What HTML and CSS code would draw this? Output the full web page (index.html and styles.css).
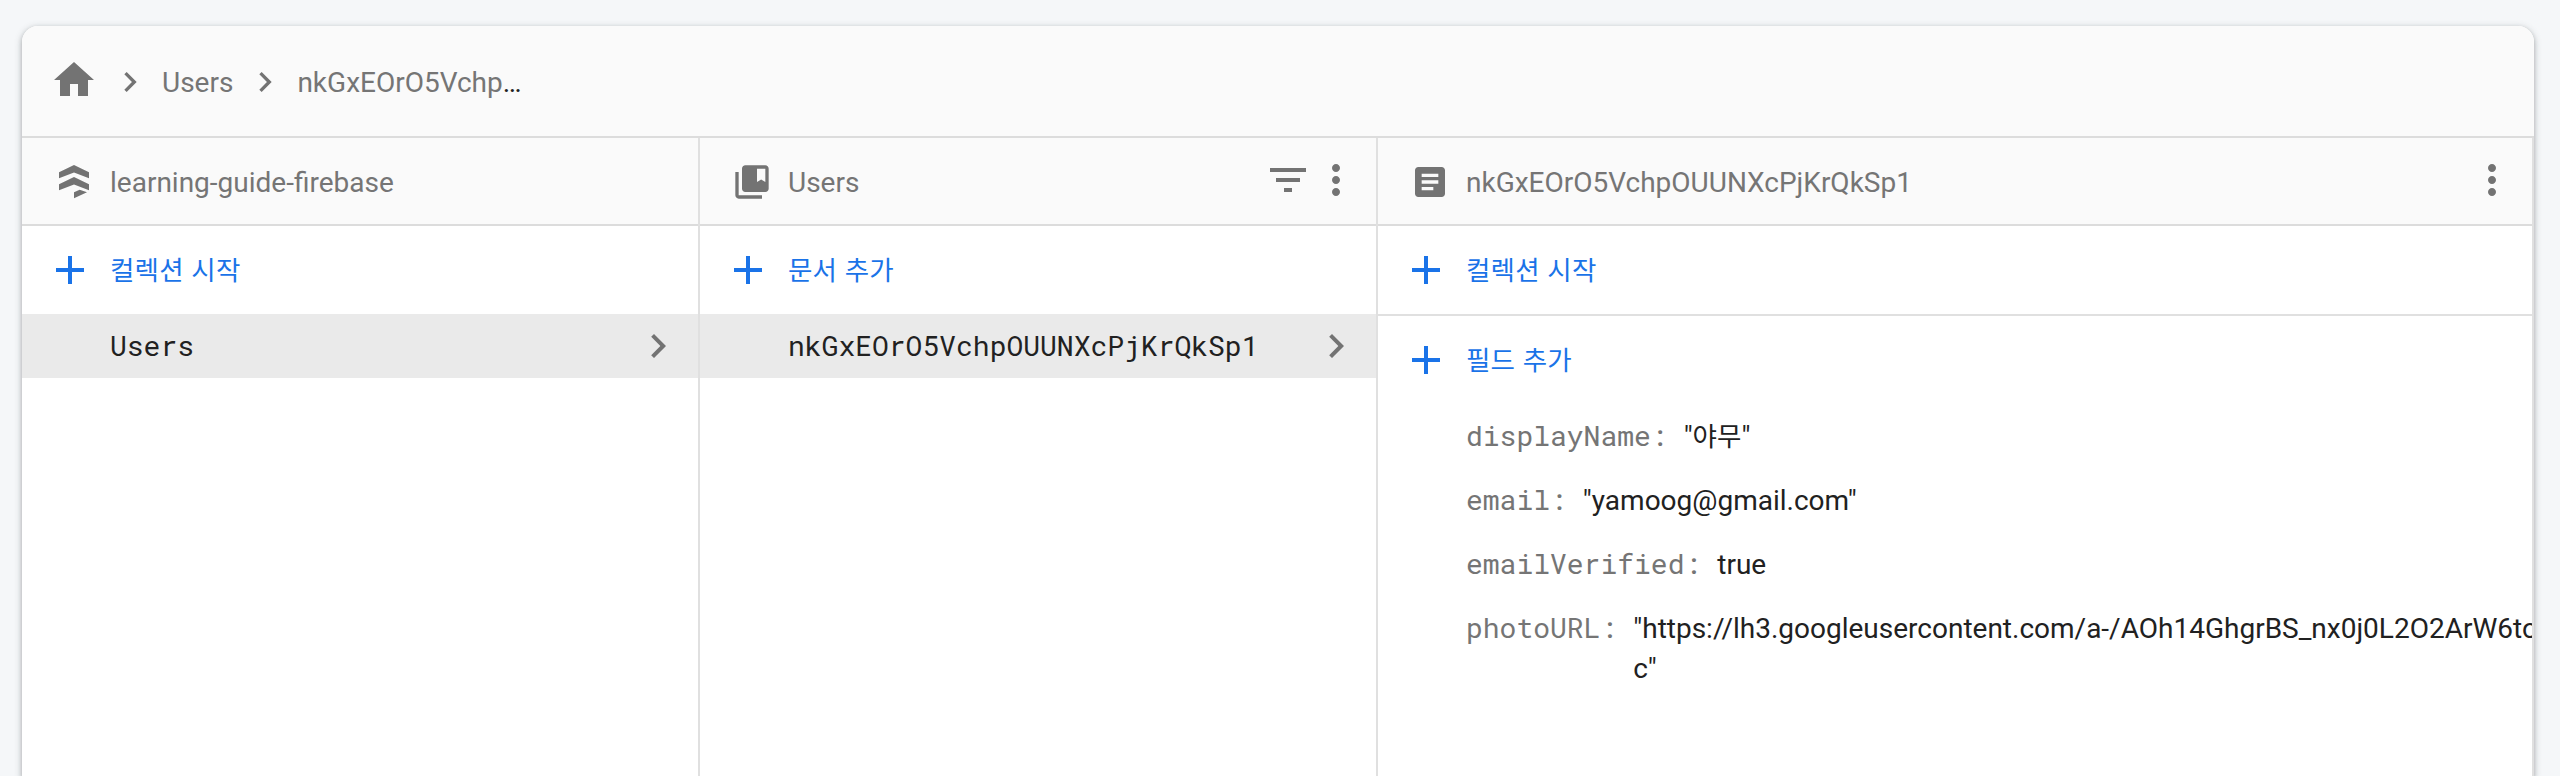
FILE: index.html
```html
<!DOCTYPE html>
<html lang="ko">
<head>
<meta charset="utf-8">
<title>Cloud Firestore</title>
<link rel="stylesheet" href="styles.css">
</head>
<body>
<svg class="defs" aria-hidden="true">
  <symbol id="chevron" viewBox="0 0 24 24"><path d="M10 6L8.59 7.41 13.17 12l-4.58 4.59L10 18l6-6z"/></symbol>
  <symbol id="add" viewBox="0 0 24 24"><path d="M19 13h-6v6h-2v-6H5v-2h6V5h2v6h6v2z"/></symbol>
  <symbol id="more" viewBox="0 0 24 24"><path d="M12 8c1.1 0 2-.9 2-2s-.9-2-2-2-2 .9-2 2 .9 2 2 2zm0 2c-1.1 0-2 .9-2 2s.9 2 2 2 2-.9 2-2-.9-2-2-2zm0 6c-1.1 0-2 .9-2 2s.9 2 2 2 2-.9 2-2-.9-2-2-2z"/></symbol>
</svg>
<main class="card">
  <nav class="crumbs">
    <svg class="icon home" viewBox="0 0 24 24"><path d="M10 20v-6h4v6h5v-8h3L12 3 2 12h3v8z"/></svg>
    <svg class="icon crumb-sep"><use href="#chevron"/></svg>
    <span class="crumb">Users</span>
    <svg class="icon crumb-sep"><use href="#chevron"/></svg>
    <span class="crumb">nkGxEOrO5Vchp<span class="dots">…</span></span>
  </nav>
  <div class="panels">
    <section class="panel">
      <header class="panel-head">
        <svg class="icon head-icon" viewBox="0 0 40 40"><path d="M5 10.300 20 3l15 7.300v6L20 10.600 5 16.300zM5 22.200 20 15l15 7.200v6L20 22.600 5 28.200zM20 30.300l5.700-2.600 7.300 2.600-13 6z"/></svg>
        <span class="title">learning-guide-firebase</span>
      </header>
      <div class="action"><svg class="icon"><use href="#add"/></svg><span class="label">컬렉션 시작</span></div>
      <div class="item"><span class="mono">Users</span><svg class="icon"><use href="#chevron"/></svg></div>
    </section>
    <section class="panel">
      <header class="panel-head">
        <svg class="icon head-icon" viewBox="0 0 24 24"><path d="M4 6H2v14c0 1.100.9 2 2 2h14v-2H4V6z"/><path d="M20 2H8c-1.100 0-2 .9-2 2v12c0 1.100.9 2 2 2h12c1.100 0 2-.9 2-2V4c0-1.100-.9-2-2-2zm0 10l-2.500-1.500L15 12V4h5v8z"/></svg>
        <span class="title">Users</span>
        <svg class="icon tool" viewBox="0 0 24 24"><path d="M10 18h4v-2h-4v2zM3 6v2h18V6H3zm3 7h12v-2H6v2z"/></svg>
        <svg class="icon tool"><use href="#more"/></svg>
      </header>
      <div class="action"><svg class="icon"><use href="#add"/></svg><span class="label">문서 추가</span></div>
      <div class="item"><span class="mono">nkGxEOrO5VchpOUUNXcPjKrQkSp1</span><svg class="icon"><use href="#chevron"/></svg></div>
    </section>
    <section class="panel wide">
      <header class="panel-head">
        <svg class="icon head-icon" viewBox="0 0 24 24"><path d="M19 3H5c-1.100 0-2 .9-2 2v14c0 1.100.9 2 2 2h14c1.100 0 2-.9 2-2V5c0-1.100-.9-2-2-2zm-5 14H7v-2h7v2zm3-4H7v-2h10v2zm0-4H7V7h10v2z"/></svg>
        <span class="title">nkGxEOrO5VchpOUUNXcPjKrQkSp1</span>
        <svg class="icon tool"><use href="#more"/></svg>
      </header>
      <div class="action ruled"><svg class="icon"><use href="#add"/></svg><span class="label">컬렉션 시작</span></div>
      <div class="action"><svg class="icon"><use href="#add"/></svg><span class="label">필드 추가</span></div>
      <dl class="fields">
        <div class="field"><dt class="mono">displayName:</dt><dd>"<span class="hangul">야무</span>"</dd></div>
        <div class="field"><dt class="mono">email:</dt><dd>"yamoog@gmail.com"</dd></div>
        <div class="field"><dt class="mono">emailVerified:</dt><dd>true</dd></div>
        <div class="field"><dt class="mono">photoURL:</dt><dd>"https://lh3.googleusercontent.com/a-/AOh14GhgrBS_nx0j0L2O2ArW6to<br>c"</dd></div>
      </dl>
    </section>
  </div>
</main>
</body>
</html>
```

FILE: styles.css
```css
* { box-sizing: border-box; }

body {
  margin: 0;
  height: 776px;
  padding: 26px 26px 0 22px;
  background: #f5f7f9;
  color: #212121;
  font: 28px/40px Roboto, "Noto Sans CJK KR", sans-serif;
}

.defs { display: none; }

.card {
  display: flex;
  flex-direction: column;
  height: 750px;
  overflow: hidden;
  border-radius: 16px 16px 0 0;
  background: #fff;
  box-shadow: 0 2px 4px rgba(60, 64, 67, .3), 0 2px 6px 2px rgba(60, 64, 67, .15);
}

.icon {
  display: block;
  flex: none;
  width: 48px;
  height: 48px;
  fill: #737373;
}

.mono { font-family: "Roboto Mono", "DejaVu Sans Mono", monospace; }

.crumbs {
  display: flex;
  align-items: center;
  height: 112px;
  padding: 0 28px;
  border-bottom: 2px solid #dcdcdc;
  background: #fafafa;
  color: #757575;
}
.home { margin-top: -2px; }
.crumb-sep { width: 40px; height: 40px; margin: 2px 12px 0; }
.crumb { margin-top: 4px; }
.dots { color: #212121; }

.panels { display: flex; flex: 1; }

.panel {
  width: 678px;
  flex: none;
  border-right: 2px solid #e0e0e0;
}
.wide { flex: 1; min-width: 0; overflow: hidden; }

.panel-head {
  display: flex;
  align-items: center;
  height: 90px;
  padding: 0 16px 0 32px;
  height: 88px;
  border-bottom: 2px solid #dcdcdc;
  background: #fafafa;
  color: #757575;
}
.head-icon { width: 40px; height: 40px; margin: 2px 16px 0 0; }
.title { flex: 1; margin-top: 4px; }
.tool { margin-top: -2px; }

.action {
  display: flex;
  align-items: center;
  gap: 16px;
  height: 88px;
  padding-left: 24px;
  color: #1a73e8;
}
.action .icon { fill: #1a73e8; }
.label {
  margin-top: 2px;
  font-size: 26.5px;
  letter-spacing: .2px;
  word-spacing: .8px;
}
.ruled { height: 90px; border-bottom: 2px solid #e0e0e0; }

.item {
  display: flex;
  align-items: center;
  justify-content: space-between;
  height: 64px;
  padding: 0 16px 0 88px;
  background: #eaeaea;
}

.fields { margin: 0; padding: 12px 0 0 88px; }
.field { display: flex; gap: 16px; margin-bottom: 24px; white-space: nowrap; }
.field dt { color: #757575; }
.field dd { margin: 1px 0 -1px; }
.hangul { font-size: 26.5px; line-height: 1; }
```
